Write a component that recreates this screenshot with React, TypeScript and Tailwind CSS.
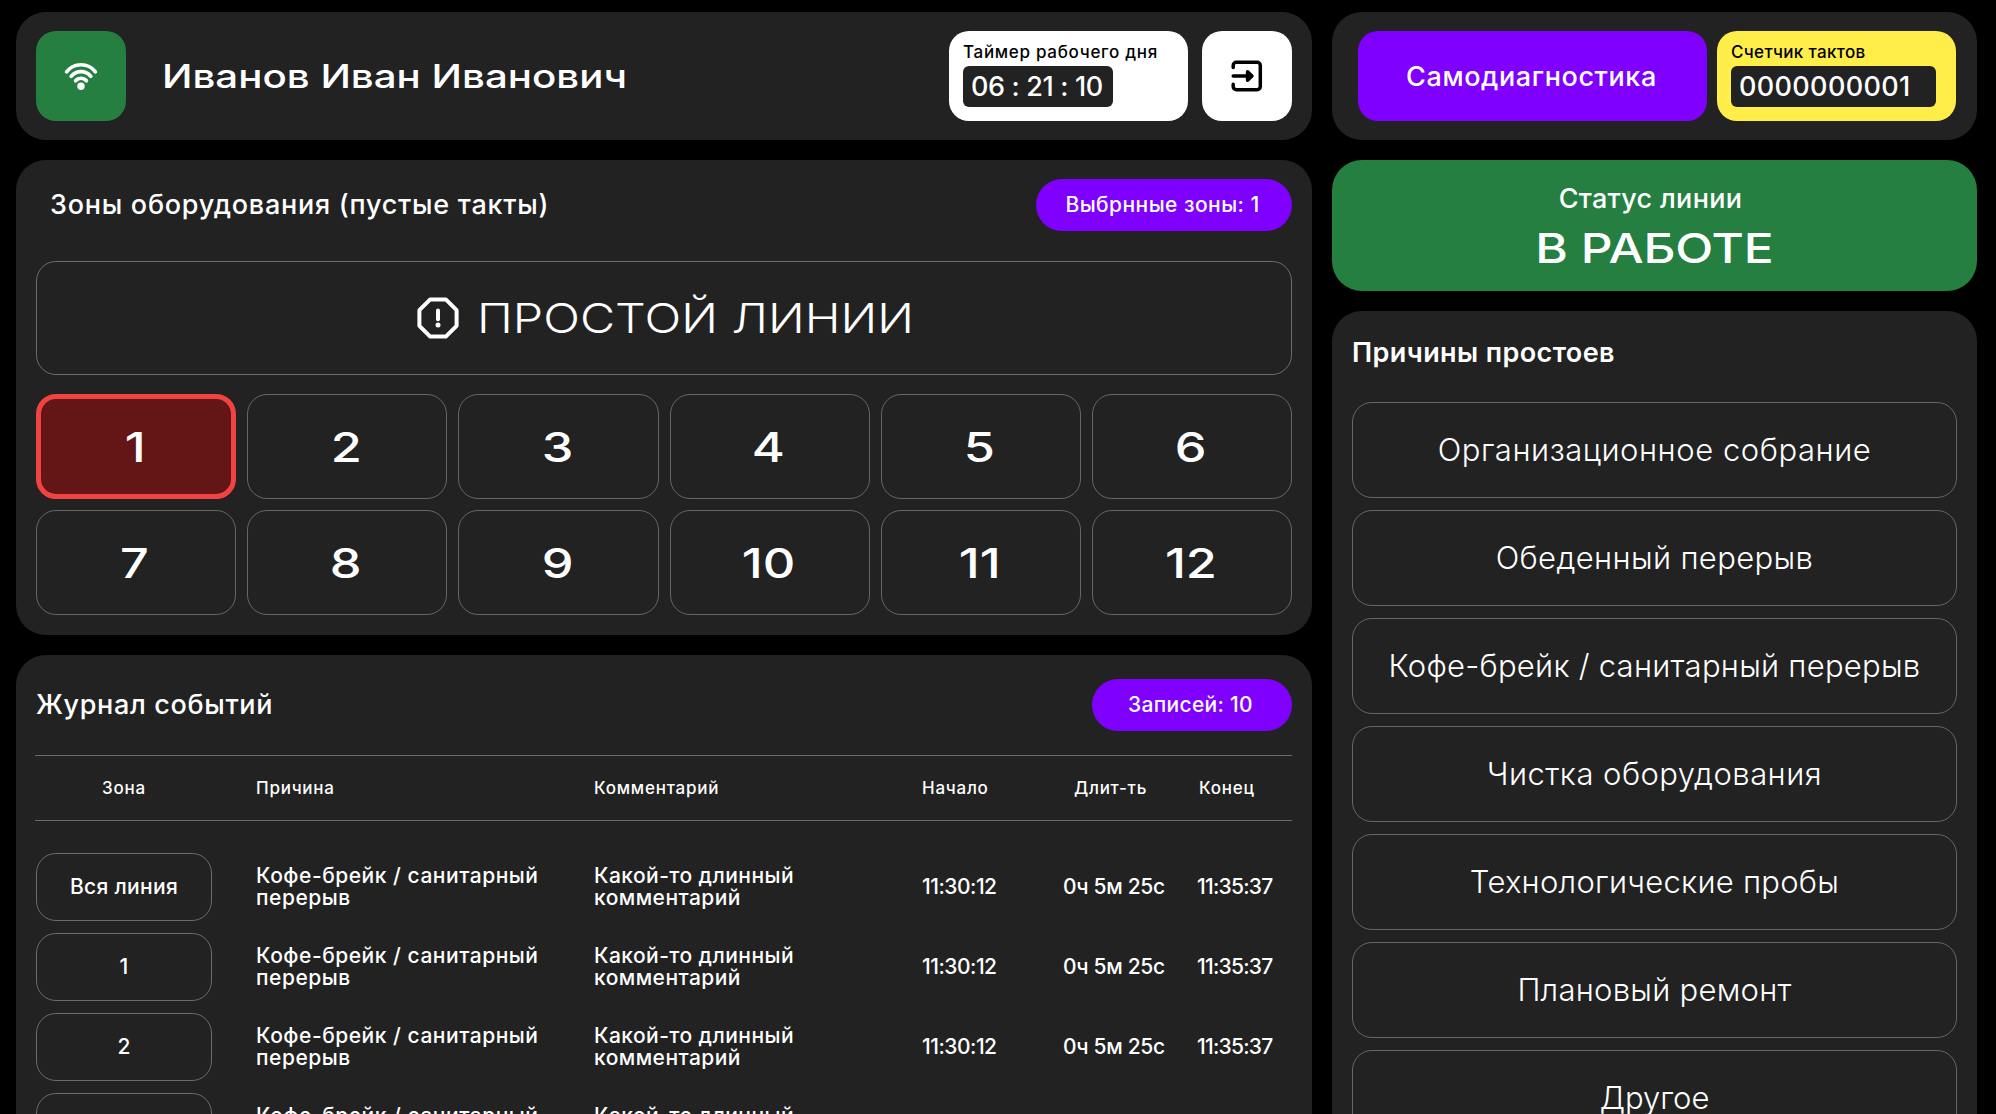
import { useState } from "react";
import clsx from "clsx";

type LogEntry = {
  id: number;
  zone: string;
  reason: string;
  comment: string;
  start: string;
  duration: string;
  end: string;
};

const ZONES = [1, 2, 3, 4, 5, 6, 7, 8, 9, 10, 11, 12];

const REASONS = [
  { title: "Организационное собрание", tracking: "tracking-[0.55px]" },
  { title: "Обеденный перерыв", tracking: "tracking-[0.35px]" },
  { title: "Кофе-брейк / санитарный перерыв", tracking: "tracking-[0.25px]" },
  { title: "Чистка оборудования", tracking: "tracking-[0.45px]" },
  { title: "Технологические пробы", tracking: "tracking-[0.25px]" },
  { title: "Плановый ремонт", tracking: "tracking-[0.25px]" },
  { title: "Другое", tracking: "tracking-normal" },
];

const LOG: LogEntry[] = ["Вся линия", "1", "2", "3"].map((zone, id) => ({
  id,
  zone,
  reason: "Кофе-брейк / санитарный перерыв",
  comment: "Какой-то длинный комментарий",
  start: "11:30:12",
  duration: "0ч 5м 25с",
  end: "11:35:37",
}));

const LOG_COLUMNS = "grid grid-cols-[220px_338px_328px_141px_134px_1fr] items-center";

function WifiIcon() {
  return (
    <svg width="40" height="40" viewBox="0 0 40 40" fill="none" stroke="white" strokeWidth="3.7" strokeLinecap="round">
      <path d="M5.6 15.8a18.2 18.2 0 0 1 28.8 0" />
      <path d="M10.2 20.4a12.4 12.4 0 0 1 19.6 0" />
      <path d="M14.6 24.8a7 7 0 0 1 10.8 0" />
      <circle cx="20" cy="30.2" r="3.7" fill="white" stroke="none" />
    </svg>
  );
}

function ExitIcon() {
  return (
    <svg width="32" height="32" viewBox="0 0 32 32" fill="none" stroke="black" strokeWidth="3.5" strokeLinecap="round" strokeLinejoin="round">
      <path d="M2.2 7.6V5.4a3.2 3.2 0 0 1 3.2-3.2h20.7a3.2 3.2 0 0 1 3.2 3.2v21.2a3.2 3.2 0 0 1-3.2 3.2H5.4a3.2 3.2 0 0 1-3.2-3.2v-2.4" />
      <path d="M2.2 16H20.6" />
      <path d="M16.6 11.8l4.3 4.2-4.3 4.2z" fill="black" />
    </svg>
  );
}

function AlertIcon() {
  return (
    <svg width="42" height="42" viewBox="0 0 42 42" fill="none" stroke="white" strokeLinecap="round" strokeLinejoin="round">
      <path d="M13.2 2.4h15.6l10.8 10.8v15.6L28.8 39.6H13.2L2.4 28.8V13.2z" strokeWidth="4" />
      <path d="M21 13.6v8.6" strokeWidth="4" />
      <circle cx="21" cy="28" r="2.5" fill="white" stroke="none" />
    </svg>
  );
}

function Pill({ children, className }: { children: React.ReactNode; className?: string }) {
  return (
    <div className={clsx("flex h-[52px] items-center justify-center rounded-full bg-[#8000ff] pr-[3px] text-[21px] font-medium", className)}>
      {children}
    </div>
  );
}

export default function App() {
  const [selected, setSelected] = useState<number[]>([1]);

  const toggleZone = (zone: number) => {
    setSelected((prev) => (prev.includes(zone) ? prev.filter((z) => z !== zone) : [...prev, zone]));
  };

  return (
    <div className="flex h-screen gap-5 overflow-hidden bg-black px-4 pt-3 font-['Inter',sans-serif] text-white">
      {/* Left column */}
      <div className="flex w-[1296px] shrink-0 flex-col gap-5">
        {/* Header */}
        <header className="flex h-32 shrink-0 items-center rounded-[30px] bg-[#222222] px-5">
          <div className="flex size-[90px] items-center justify-center rounded-[20px] bg-[#247f41]">
            <WifiIcon />
          </div>
          <h1 className="ml-9 origin-left scale-x-[1.22] whitespace-nowrap pt-0.5 text-[33px] font-medium">Иванов Иван Иванович</h1>
          <div className="ml-auto flex gap-3.5">
            <div className="flex h-[90px] w-[239px] flex-col items-start rounded-[20px] bg-white px-3.5 pt-2.5">
              <span className="whitespace-nowrap text-[17px] font-medium leading-[22px] tracking-[0.7px] text-black">Таймер рабочего дня</span>
              <span className="mt-[3px] flex h-[41px] w-[150px] items-center rounded-md bg-[#222222] pl-2 pt-0.5 text-[27px] font-medium tracking-[-0.35px]">
                06 : 21 : 10
              </span>
            </div>
            <button className="flex size-[90px] items-center justify-center rounded-[20px] bg-white">
              <ExitIcon />
            </button>
          </div>
        </header>

        {/* Zones */}
        <section className="h-[475px] shrink-0 rounded-[30px] bg-[#222222] px-5 pt-[19px]">
          <div className="flex items-center justify-between pl-3.5">
            <h2 className="text-[27px] font-medium tracking-[0.73px]">Зоны оборудования (пустые такты)</h2>
            <Pill className="w-64 tracking-[0.45px]">Выбрнные зоны: {selected.length}</Pill>
          </div>
          <button className="mt-[30px] flex h-[114px] w-full items-center justify-center gap-[18px] rounded-[20px] border border-[#6b6b6b]">
            <AlertIcon />
            <span className="w-[435px] whitespace-nowrap pt-px text-left text-[41px] font-light">
              <span className="inline-block origin-left scale-x-[1.18]">ПРОСТОЙ ЛИНИИ</span>
            </span>
          </button>
          <div className="mt-[19px] grid grid-cols-6 gap-[11px]">
            {ZONES.map((zone) => (
              <button
                key={zone}
                onClick={() => toggleZone(zone)}
                className={clsx(
                  "flex h-[105px] items-center justify-center rounded-[20px] text-[41px] font-medium",
                  selected.includes(zone) ? "border-[5px] border-[#f24343] bg-[#641616]" : "border border-[#666666]"
                )}
              >
                <span className="scale-x-[1.23] pr-0.5 pt-0.5">{zone}</span>
              </button>
            ))}
          </div>
        </section>

        {/* Event log */}
        <section className="h-[560px] shrink-0 rounded-t-[30px] bg-[#222222] px-5 pt-6">
          <div className="flex items-center justify-between">
            <h2 className="text-[27px] font-medium tracking-[0.65px]">Журнал событий</h2>
            <Pill className="w-[200px] tracking-[0.3px]">Записей: 10</Pill>
          </div>
          <div className={clsx(LOG_COLUMNS, "mt-6 -ml-px h-[66px] border-y border-[#6b6b6b] pt-0.5 text-[17px] font-medium tracking-[0.75px]")}>
            <span className="w-[178px] text-center">Зона</span>
            <span className="pl-px">Причина</span>
            <span className="pl-px">Комментарий</span>
            <span className="pl-px">Начало</span>
            <span className="pl-3">Длит-ть</span>
            <span className="pl-[3px]">Конец</span>
          </div>
          <div className="mt-8 flex flex-col gap-3">
            {LOG.map((entry) => (
              <div key={entry.id} className={clsx(LOG_COLUMNS, "h-[68px] text-[21px] font-medium leading-[22px]")}>
                <span className="flex h-full w-44 items-center justify-center rounded-[20px] border border-[#6b6b6b] tracking-[0.3px]">
                  {entry.zone}
                </span>
                <span className="w-[300px] tracking-[0.53px]">{entry.reason}</span>
                <span className="w-[220px] tracking-[0.45px]">{entry.comment}</span>
                <span className="tracking-[-0.5px]">{entry.start}</span>
                <span className="tracking-[-0.3px]">{entry.duration}</span>
                <span className="tracking-[-0.75px]">{entry.end}</span>
              </div>
            ))}
          </div>
        </section>
      </div>

      {/* Right column */}
      <div className="flex w-[645px] shrink-0 flex-col gap-5">
        <header className="flex h-32 shrink-0 items-center gap-2.5 rounded-[30px] bg-[#222222] pl-[26px]">
          <button className="flex h-[90px] w-[349px] items-center justify-center rounded-[20px] bg-[#8000ff] pr-0.5 pt-0.5 text-[27px] font-medium tracking-[0.6px]">
            Самодиагностика
          </button>
          <div className="flex h-[90px] w-[239px] flex-col items-start rounded-[20px] bg-[#ffee4a] px-3.5 pt-2.5">
            <span className="text-[17px] font-medium leading-[22px] tracking-[0.35px] text-black">Счетчик тактов</span>
            <span className="mt-[3px] flex h-[41px] w-[205px] items-center rounded-md bg-[#222222] pl-2 pt-0.5 text-[27px] font-medium tracking-[0.35px]">
              0000000001
            </span>
          </div>
        </header>

        {/* Line status */}
        <section className="flex h-[131px] shrink-0 flex-col items-center rounded-[30px] bg-[#247f41] pt-[22px]">
          <span className="pr-2 text-[27px] font-medium leading-[34px] tracking-[0.3px]">Статус линии</span>
          <span className="mt-1.5 scale-x-[1.21] text-[41px] font-medium leading-[52px] tracking-[-0.2px]">В РАБОТЕ</span>
        </section>

        {/* Downtime reasons */}
        <section className="h-[900px] shrink-0 rounded-t-[30px] bg-[#222222] px-5 pt-[22px]">
          <h2 className="text-[27px] font-semibold leading-10 tracking-[0.4px]">Причины простоев</h2>
          <div className="mt-[29px] flex flex-col gap-3">
            {REASONS.map((reason) => (
              <button
                key={reason.title}
                className={clsx("flex h-24 items-center justify-center rounded-[20px] border border-[#666666] text-[31px] font-light", reason.tracking)}
              >
                {reason.title}
              </button>
            ))}
          </div>
        </section>
      </div>
    </div>
  );
}
